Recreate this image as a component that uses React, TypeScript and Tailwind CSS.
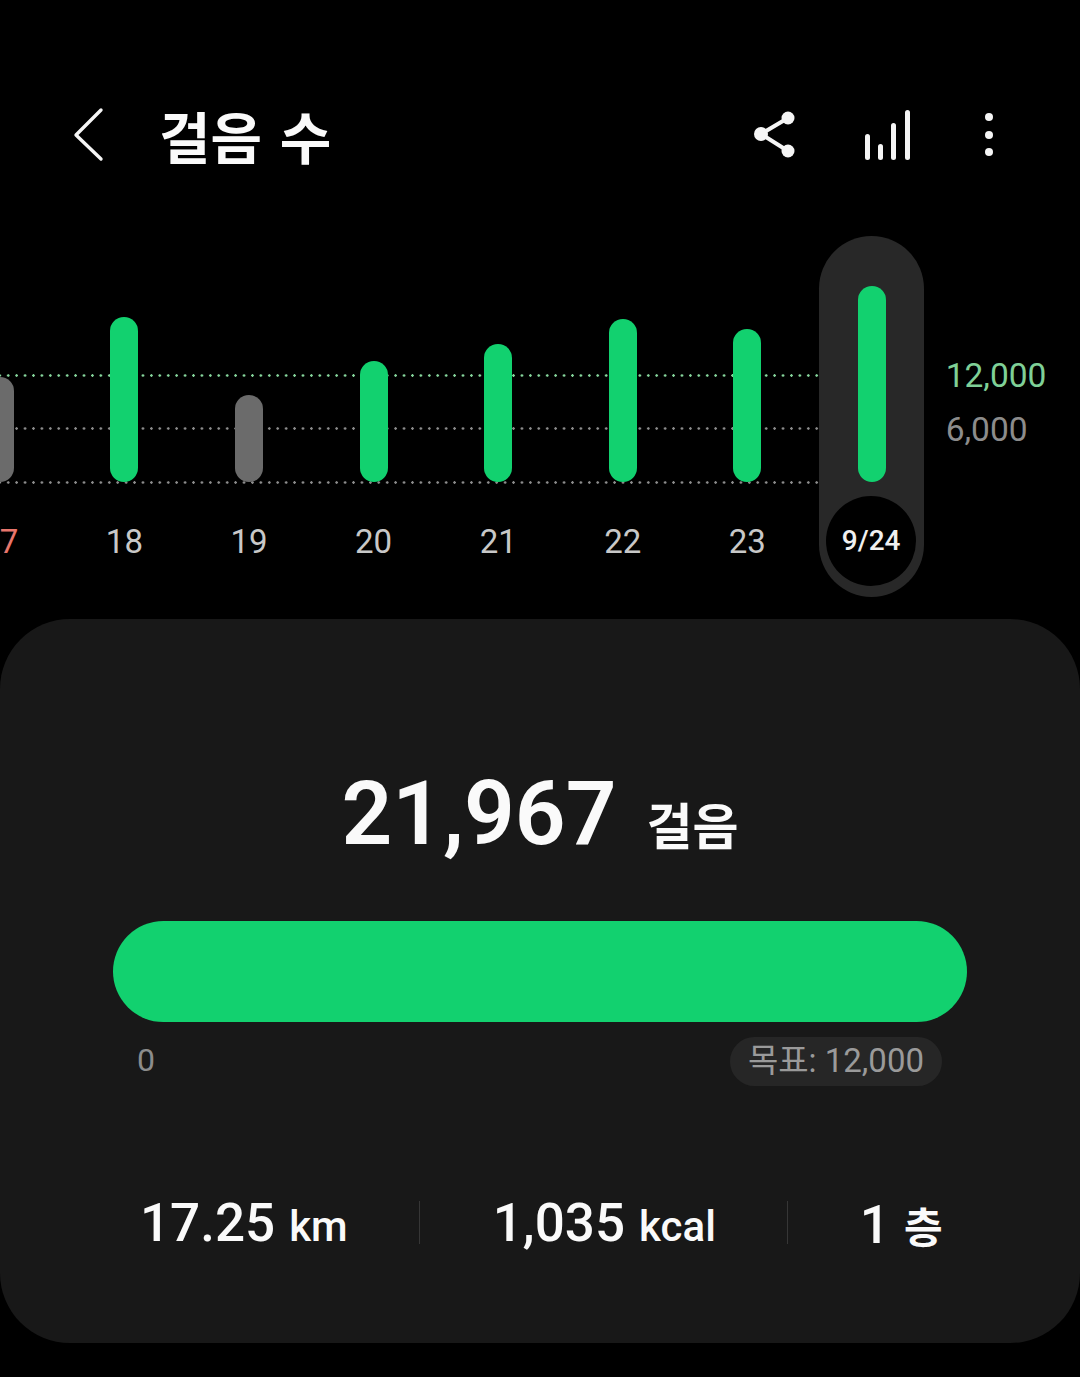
const days = [
  { label: "17", height: 105, color: "bg-[#6b6b6b]", text: "text-[#e8766c]" },
  { label: "18", height: 165, color: "bg-[#12d16f]", text: "text-[#c8c8c8]" },
  { label: "19", height: 87, color: "bg-[#6b6b6b]", text: "text-[#c8c8c8]" },
  { label: "20", height: 121, color: "bg-[#12d16f]", text: "text-[#c8c8c8]" },
  { label: "21", height: 138, color: "bg-[#12d16f]", text: "text-[#c8c8c8]" },
  { label: "22", height: 163, color: "bg-[#12d16f]", text: "text-[#c8c8c8]" },
  { label: "23", height: 153, color: "bg-[#12d16f]", text: "text-[#c8c8c8]" },
];

const BackIcon = () => (
  <svg width="32" height="56" viewBox="0 0 32 56" fill="none">
    <path d="M28 3 L3 28 L28 52" stroke="#f5f5f5" strokeWidth="3.4" strokeLinecap="round" strokeLinejoin="round" />
  </svg>
);

const ShareIcon = () => (
  <svg width="44" height="50" viewBox="0 0 44 50" fill="#f5f5f5">
    <path d="M35 9 L8 25 L35 42" fill="none" stroke="#f5f5f5" strokeWidth="4" />
    <circle cx="35" cy="9" r="6.5" />
    <circle cx="8" cy="25" r="7" />
    <circle cx="35" cy="42" r="6.5" />
  </svg>
);

const BarsIcon = () => (
  <svg width="48" height="52" viewBox="0 0 48 52" fill="#f5f5f5">
    <rect x="1" y="25" width="5" height="26" rx="2.5" />
    <rect x="14" y="35" width="5" height="16" rx="2.5" />
    <rect x="27" y="14" width="5" height="37" rx="2.5" />
    <rect x="41" y="1" width="5" height="50" rx="2.5" />
  </svg>
);

const MoreIcon = () => (
  <svg width="10" height="46" viewBox="0 0 10 46" fill="#f5f5f5">
    <circle cx="5" cy="5" r="4" />
    <circle cx="5" cy="23" r="4" />
    <circle cx="5" cy="40" r="4" />
  </svg>
);

const App = () => {
  return (
    <div className="w-[1080px] h-[1377px] bg-black overflow-hidden flex flex-col font-['Roboto','Noto_Sans_CJK_KR',sans-serif]">
      {/* header */}
      <div className="h-[236px] pt-[107px] pl-[73px] pr-[86px] flex items-start">
        <BackIcon />
        <p className="ml-[54px] -mt-[7px] text-[56px] leading-[70px] font-bold [word-spacing:5px] text-[#fafafa] font-['Noto_Sans_CJK_KR',sans-serif]">걸음 수</p>
        <div className="ml-auto mt-[2px]">
          <ShareIcon />
        </div>
        <div className="ml-[67px] mt-[2px]">
          <BarsIcon />
        </div>
        <div className="ml-[72px] mt-[5px]">
          <MoreIcon />
        </div>
      </div>

      {/* chart */}
      <div className="relative h-[361px] flex shrink-0">
        <div className="absolute left-0 top-[138px] w-[819px] h-[3px] bg-[radial-gradient(circle,#86d69c_1px,transparent_1.5px)] bg-[length:8.43px_3px] bg-[position:4px_0]" />
        <div className="absolute left-0 top-[191px] w-[819px] h-[3px] bg-[radial-gradient(circle,#8c8c8c_1px,transparent_1.5px)] bg-[length:8.43px_3px] bg-[position:4px_0]" />
        <div className="absolute left-0 top-[245px] w-[819px] h-[3px] bg-[radial-gradient(circle,#8c8c8c_1px,transparent_1.5px)] bg-[length:8.43px_3px] bg-[position:4px_0]" />

        <div className="relative flex -ml-[62.5px]">
          {days.map((day) => (
            <div key={day.label} className="w-[124.6px] flex flex-col items-center">
              <div className="h-[246px] flex items-end">
                <div className={`w-[28px] rounded-full ${day.color}`} style={{ height: day.height }} />
              </div>
              <p className={`mt-[40px] text-[33px] leading-[40px] ${day.text}`}>{day.label}</p>
            </div>
          ))}
        </div>

        <div className="relative ml-[9px] w-[105px] h-[361px] rounded-full bg-[#282828] flex flex-col items-center">
          <div className="mt-[50px] ml-[2px] w-[28px] h-[196px] rounded-full bg-[#12d16f]" />
          <div className="mt-[14px] w-[90px] h-[90px] rounded-full bg-black flex items-center justify-center">
            <span className="text-[28px] font-medium text-[#f0f0f0]">9/24</span>
          </div>
        </div>

        <div className="relative ml-[22px] pt-[119px]">
          <p className="text-[33.5px] leading-[42px] text-[#7fd097]">12,000</p>
          <p className="mt-[12px] text-[33.5px] leading-[42px] text-[#8c8c8c]">6,000</p>
        </div>
      </div>

      {/* card */}
      <div className="mt-[22px] h-[724px] rounded-[70px] bg-[#181818] flex flex-col items-center">
        <div className="mt-[145px] h-[100px] flex items-end">
          <span className="text-[89px] leading-[100px] font-semibold text-[#fafafa]">21,967</span>
          <span className="ml-[30px] mb-[11px] text-[50px] leading-[60px] font-bold text-[#fafafa] font-['Noto_Sans_CJK_KR',sans-serif]">걸음</span>
        </div>

        <div className="mt-[57px] w-[854px] h-[101px] rounded-full bg-[#12d16f]" />

        <div className="mt-[14px] w-[854px] pl-[24px] pr-[25px] flex justify-between items-center">
          <span className="pb-[2px] text-[32px] text-[#8c8c8c]">0</span>
          <span className="h-[49px] px-[18px] pb-[1px] rounded-full bg-[#262626] flex items-center text-[33px] text-[#9a9a9a]">목표: 12,000</span>
        </div>

        <div className="mt-[107px] w-full pl-[140px] flex items-center font-medium text-[#fafafa]">
          <div className="flex items-baseline">
            <span className="text-[53px] leading-[60px]">17.25</span>
            <span className="ml-[14px] text-[42px] leading-[60px]">km</span>
          </div>
          <div className="ml-[71px] -mt-[6px] w-px h-[43px] bg-[#363636]" />
          <div className="ml-[73px] flex items-baseline">
            <span className="text-[53px] leading-[60px]">1,035</span>
            <span className="ml-[14px] text-[42px] leading-[60px]">kcal</span>
          </div>
          <div className="ml-[71px] -mt-[6px] w-px h-[43px] bg-[#363636]" />
          <div className="ml-[72px] flex items-baseline">
            <span className="text-[53px] leading-[60px]">1</span>
            <span className="ml-[14px] text-[42px] leading-[60px] font-bold font-['Noto_Sans_CJK_KR',sans-serif]">층</span>
          </div>
        </div>
      </div>
    </div>
  );
};

export default App;
